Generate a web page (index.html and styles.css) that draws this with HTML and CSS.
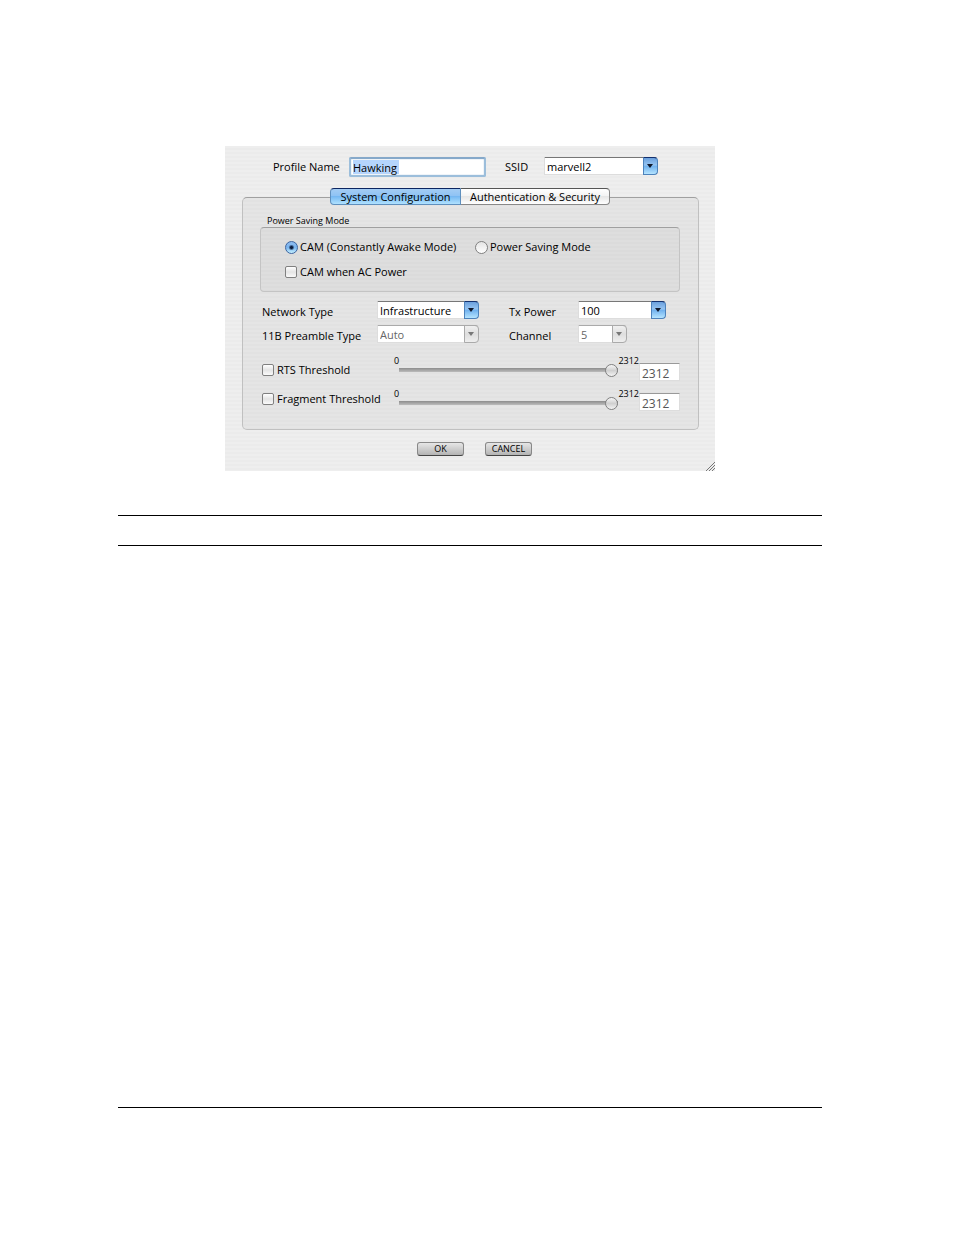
FILE: index.html
```html
<!DOCTYPE html>
<html lang="en">
<head>
    <meta charset="UTF-8">
    <meta name="viewport" content="width=device-width, initial-scale=1.0">
    <title>Profile Settings</title>
    <link rel="stylesheet" href="styles.css">
</head>
<body>
    <main class="page">
        <form class="dialog">
            <div class="profile-row">
                <label for="profileName">Profile Name</label>
                <input class="profile-input" type="text" id="profileName" value="Hawking">
                <label for="ssid">SSID</label>
                <div class="combo">
                    <select id="ssid"><option>marvell2</option></select>
                </div>
            </div>

            <section class="panel">
                <div class="tabs" role="tablist">
                    <button type="button" class="tab active" role="tab" aria-selected="true">System Configuration</button>
                    <button type="button" class="tab" role="tab" aria-selected="false">Authentication &amp; Security</button>
                </div>

                <fieldset class="power">
                    <legend>Power Saving Mode</legend>
                    <div class="power-box">
                        <label class="check"><input type="radio" name="power" checked>CAM (Constantly Awake Mode)</label>
                        <label class="check"><input type="radio" name="power">Power Saving Mode</label>
                        <label class="check"><input type="checkbox">CAM when AC Power</label>
                    </div>
                </fieldset>

                <div class="settings">
                    <label for="networkType">Network Type</label>
                    <div class="combo network">
                        <select id="networkType"><option>Infrastructure</option></select>
                    </div>
                    <label for="txPower">Tx Power</label>
                    <div class="combo power-level">
                        <select id="txPower"><option>100</option></select>
                    </div>
                    <label for="preamble">11B Preamble Type</label>
                    <div class="combo network disabled">
                        <select id="preamble" disabled><option>Auto</option></select>
                    </div>
                    <label for="channel">Channel</label>
                    <div class="combo channel disabled">
                        <select id="channel" disabled><option>5</option></select>
                    </div>
                </div>

                <div class="thresholds">
                    <div class="threshold-names">
                        <label class="check"><input type="checkbox">RTS Threshold</label>
                        <label class="check"><input type="checkbox">Fragment Threshold</label>
                    </div>
                    <div class="sliders">
                        <div class="slider">
                            <span>0</span>
                            <input type="range" min="0" max="2312" value="2312" aria-label="RTS Threshold" disabled>
                            <span>2312</span>
                        </div>
                        <div class="slider">
                            <span>0</span>
                            <input type="range" min="0" max="2312" value="2312" aria-label="Fragment Threshold" disabled>
                            <span>2312</span>
                        </div>
                    </div>
                    <div class="threshold-values">
                        <input type="text" value="2312" aria-label="RTS Threshold" disabled>
                        <input type="text" value="2312" aria-label="Fragment Threshold" disabled>
                    </div>
                </div>
            </section>

            <div class="actions">
                <button type="button">OK</button>
                <button type="button">CANCEL</button>
            </div>

            <svg class="grip" viewBox="0 0 10 10" aria-hidden="true">
                <path d="M1 10L10 1M4 10L10 4M7 10L10 7" fill="none" stroke="#777"/>
            </svg>
        </form>

        <div class="heading-rule"></div>
        <hr class="footer-rule">
    </main>
</body>
</html>
```
FILE: styles.css
```css
*, *::before {
    box-sizing: border-box;
}
body {
    margin: 0;
    background: #fff;
    color: #000;
    font-family: "Open Sans", "Noto Sans", sans-serif;
    font-size: 11px;
    line-height: 14px;
}
input, select, button {
    font: inherit;
    color: inherit;
    margin: 0;
}
.page {
    padding: 146px 132px 60px 118px;
}

/* Dialog window */
.dialog {
    position: relative;
    max-width: 490px;
    margin: 0 auto;
    padding: 11px 16px 15px 17px;
    background: repeating-linear-gradient(#eeeeee 0 2px, #ebebeb 2px 4px);
}
.profile-row {
    display: grid;
    grid-template-columns: 76px 156px 39px 114px;
    align-items: center;
    padding-left: 31px;
    height: 20px;
}
.profile-row .combo {
    align-self: start;
}
.profile-input {
    width: 137px;
    height: 20px;
    padding: 0 2px;
    border: 2px solid #9cbedb;
    border-top-color: #86a9ca;
    border-radius: 2px;
    outline: 0;
    background: linear-gradient(#b5d5fd, #b5d5fd) 2px 1px / 46px 14px no-repeat #fff;
    box-shadow: inset 0 0 1px #5d8fc0;
}

/* Drop-downs */
.combo {
    position: relative;
    height: 18px;
}
.combo select {
    display: block;
    width: 100%;
    height: 18px;
    padding: 1px 16px 0 2px;
    appearance: none;
    border: 1px solid #ddd;
    border-top-color: #777;
    border-radius: 0 4px 4px 0;
    background: #fff;
    opacity: 1;
}
.combo::before {
    content: "";
    position: absolute;
    top: 0;
    right: 0;
    width: 15px;
    height: 18px;
    border: 1px solid #4d82bb;
    border-top-color: #12306f;
    border-radius: 0 4px 4px 0;
    background: linear-gradient(#6ba0dd, #97c5f2 45%, #6fb0ee 50%, #b5e4ff);
    pointer-events: none;
}
.combo::after {
    content: "";
    position: absolute;
    top: 7px;
    right: 5px;
    border: 3px solid transparent;
    border-top: 4px solid #10182c;
    border-bottom: 0;
    pointer-events: none;
}
.combo.disabled select {
    color: #666;
    border-top-color: #aaa;
}
.combo.disabled::before {
    border-color: #aaa;
    background: linear-gradient(#f0f0f0, #dedede 50%, #eee);
}
.combo.disabled::after {
    border-top-color: #777;
}
.network {
    width: 102px;
}
.power-level {
    width: 88px;
}
.channel {
    width: 49px;
}

/* Tabbed panel */
.panel {
    margin-top: 20px;
    padding: 0 18px 18px 17px;
    border: 1px solid #c0c0c0;
    border-top-color: #a0a0a0;
    border-radius: 5px;
    background: repeating-linear-gradient(#e5e5e5 0 2px, #e2e2e2 2px 4px);
}
.tabs {
    display: flex;
    justify-content: center;
    margin-top: -10px;
}
.tab {
    width: 149px;
    height: 17px;
    padding: 0;
    border: 1px solid #888;
    border-top-color: #555;
    border-left: 0;
    border-radius: 0 4px 4px 0;
    background: linear-gradient(#fff, #f2f2f2 50%, #e6e6e6 50%, #fff);
    line-height: 15px;
    white-space: nowrap;
}
.tab.active {
    width: 131px;
    border: 1px solid #5f8fbd;
    border-top: 1px solid #0c2560;
    border-radius: 4px 0 0 4px;
    background: linear-gradient(#a3ccf4, #8dc2f4 50%, #76b8f2 50%, #b0e2ff);
}
.power {
    margin: 10px 0 0;
    padding: 0;
    border: 0;
}
.power legend {
    padding: 0 7px;
    font-size: 9px;
    line-height: 12px;
}
.power-box {
    display: grid;
    grid-template-columns: 190px auto;
    row-gap: 11px;
    padding: 12px 24px;
    border: 1px solid #c4c4c4;
    border-top-color: #a0a0a0;
    border-radius: 4px;
    background: repeating-linear-gradient(#dedede 0 2px, #dbdbdb 2px 4px);
}
.check {
    display: flex;
    align-items: center;
    gap: 2px;
    height: 14px;
    white-space: nowrap;
}
.check input {
    flex: none;
    appearance: none;
    width: 13px;
    height: 13px;
    border: 1px solid #808080;
}
.check input[type="checkbox"] {
    width: 12px;
    height: 12px;
    margin-right: 1px;
    border-radius: 2px;
    background: linear-gradient(#fff, #e4e4e4 50%, #fafafa);
}
.check input[type="radio"] {
    border-radius: 50%;
    background: linear-gradient(#e4e4e4, #fff);
}
.check input[type="radio"]:checked {
    border-color: #3c64a0;
    background:
        radial-gradient(circle, #0a1a3c 0 1px, transparent 3px),
        linear-gradient(#8fbcf0, #79b4ee 50%, #c4f0ff);
}
.settings {
    display: grid;
    grid-template-columns: 115px 132px 69px auto;
    row-gap: 6px;
    margin-top: 9px;
    padding-left: 2px;
}
.settings label {
    padding-top: 4px;
    height: 18px;
}

/* Thresholds */
.thresholds {
    display: grid;
    grid-template-columns: 132px 1fr 41px;
    margin-top: 12px;
    padding-left: 2px;
}
.threshold-names {
    display: grid;
    align-content: start;
    gap: 15px;
    padding-top: 8px;
}
.sliders {
    display: grid;
    align-content: start;
    gap: 11px;
}
.slider {
    display: flex;
    height: 22px;
    font-size: 9px;
    line-height: 12px;
}
.slider input {
    flex: 1;
    align-self: flex-end;
    min-width: 0;
    height: 14px;
    appearance: none;
    background: linear-gradient(#8c8c8c, #bcbcbc) center / 100% 4px no-repeat;
}
.slider input::-webkit-slider-thumb {
    appearance: none;
    width: 13px;
    height: 13px;
    border: 1px solid #808080;
    border-radius: 50%;
    background: linear-gradient(#f6f6f6, #d0d0d0 50%, #f4f4f4);
}
.threshold-values {
    display: grid;
    align-content: start;
    gap: 12px;
    padding-top: 8px;
}
.threshold-values input {
    width: 100%;
    height: 18px;
    padding: 2px 2px 0;
    border: 1px solid #ddd;
    border-top-color: #999;
    background: #fff;
    color: #555;
    font-size: 12px;
}

/* Buttons */
.actions {
    display: flex;
    gap: 21px;
    margin-top: 12px;
    padding-left: 175px;
}
.actions button {
    width: 47px;
    height: 14px;
    padding: 0;
    border: 1px solid #888;
    border-bottom-color: #444;
    border-radius: 3px;
    background: linear-gradient(#e6e6e6, #b4b4b4);
    font-size: 9px;
    line-height: 12px;
}
.grip {
    position: absolute;
    right: 0;
    bottom: 0;
    width: 10px;
    height: 10px;
}

/* Page rules */
.heading-rule {
    height: 31px;
    margin-top: 44px;
    border-top: 1px solid #000;
    border-bottom: 1px solid #000;
}
.footer-rule {
    margin: 561px 0 0;
    border: 0;
    border-top: 1px solid #000;
}
```
